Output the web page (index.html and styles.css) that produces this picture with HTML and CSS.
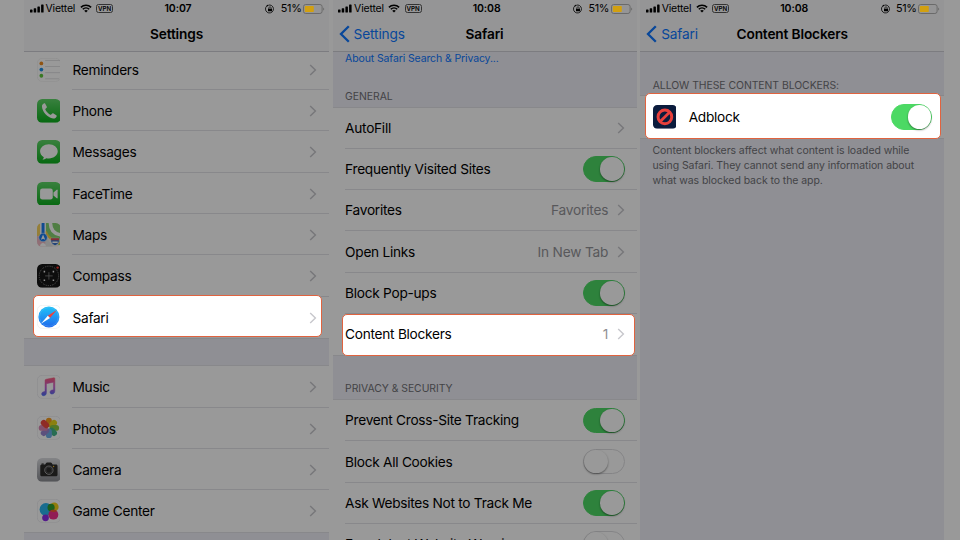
FILE: index.html
```html
<!DOCTYPE html>
<html lang="en">
<head>
    <meta charset="UTF-8">
    <meta name="viewport" content="width=device-width, initial-scale=1.0">
    <title>Content Blockers</title>
    <link rel="stylesheet" href="styles.css">
</head>
<body>
    <!-- shared icons -->
    <svg class="sprite" aria-hidden="true">
        <defs>
            <linearGradient id="green" x1="0" y1="0" x2="0" y2="1">
                <stop offset="0" stop-color="#5fd668"/>
                <stop offset="1" stop-color="#0bae1c"/>
            </linearGradient>
            <linearGradient id="blue" x1="0" y1="0" x2="0" y2="1">
                <stop offset="0" stop-color="#1fc4f8"/>
                <stop offset="1" stop-color="#2068ec"/>
            </linearGradient>
            <linearGradient id="note" x1="0" y1="0" x2="0" y2="1">
                <stop offset="0" stop-color="#fb5c7c"/>
                <stop offset=".5" stop-color="#c95acb"/>
                <stop offset="1" stop-color="#4c6cf5"/>
            </linearGradient>
            <linearGradient id="grey" x1="0" y1="0" x2="0" y2="1">
                <stop offset="0" stop-color="#dbdce0"/>
                <stop offset="1" stop-color="#898b91"/>
            </linearGradient>
            <clipPath id="tile"><rect width="24" height="24" rx="5.2"/></clipPath>
        </defs>
        <symbol id="signal" viewBox="0 0 14 9">
            <rect x="0" y="5.6" width="2.5" height="3" rx=".6"/>
            <rect x="3.7" y="4.2" width="2.5" height="4.4" rx=".6"/>
            <rect x="7.4" y="2.4" width="2.5" height="6.2" rx=".6"/>
            <rect x="11.1" y=".4" width="2.5" height="8.2" rx=".6"/>
        </symbol>
        <symbol id="wifi" viewBox="0 0 12 9">
            <path d="M.9 3.4a7.2 7.2 0 0 1 10.2 0M2.8 5.3a4.6 4.6 0 0 1 6.4 0" fill="none" stroke="#000" stroke-width="1.6"/>
            <path d="M6 8.6 4.2 6.8a2.6 2.6 0 0 1 3.6 0z"/>
        </symbol>
        <symbol id="lock" viewBox="0 0 10 10">
            <path d="M1.9 1.9A4 4 0 1 0 5 1a4 4 0 0 0-1.7.4" fill="none" stroke="#111" stroke-width=".9"/>
            <path d="M3.2.4 3 2.6 1.2 1.8z"/>
            <rect x="3" y="4.7" width="4" height="2.6" rx=".4"/>
            <path d="M3.8 5V4a1.2 1.2 0 0 1 2.4 0v1" fill="none" stroke="#111" stroke-width=".7"/>
        </symbol>
        <symbol id="battery" viewBox="0 0 22 10">
            <rect x=".5" y=".5" width="18.6" height="9" rx="2.2" fill="none" stroke="#6a6a6a"/>
            <rect x="1.8" y="1.9" width="9" height="6.2" rx=".8" fill="#d2a010"/>
            <path d="M20.2 3.4a1.8 1.8 0 0 1 0 3.2z" fill="#6a6a6a"/>
        </symbol>
        <symbol id="chevron" viewBox="0 0 8 12">
            <path d="M1.2 1 6.4 6 1.2 11" fill="none" stroke="currentColor" stroke-width="1.4"/>
        </symbol>
        <symbol id="back" viewBox="0 0 12 18">
            <path d="M9.8 1.2 2 9l7.8 7.8" fill="none" stroke="currentColor" stroke-width="2.3"/>
        </symbol>
        <symbol id="app-reminders" viewBox="0 0 24 24">
            <rect x=".3" y=".3" width="23.4" height="23.4" rx="5" fill="#fff" stroke="#ececec" stroke-width=".7"/>
            <path d="M8.2 2.5h15M8.2 8.6h15.2M8.2 14.8h15.2M8.2 21h14" stroke="#d8d8da" stroke-width=".8"/>
            <circle cx="4.4" cy="5.5" r="1.9" fill="#f08c1e"/>
            <circle cx="4.4" cy="11.7" r="1.9" fill="#1e90e8"/>
            <circle cx="4.4" cy="17.9" r="1.9" fill="#5fc83c"/>
        </symbol>
        <symbol id="app-phone" viewBox="0 0 24 24">
            <rect width="24" height="24" rx="5.2" fill="url(#green)"/>
            <path d="M7.3 4.4c-1.2.5-2.4 1.6-2.3 3.2.3 5.5 5.7 11.3 11.3 12.1 1.7.2 3-.9 3.5-2.1.2-.5.1-.9-.3-1.2l-2.800-1.900c-.5-.3-.9-.3-1.3.1l-1.100 1.100c-.3.3-.6.3-1 .1-1.9-1-3.8-3-4.8-4.900-.2-.4-.2-.7.1-1l1.100-1.100c.4-.4.4-.8.1-1.300L8.300 4.700c-.3-.4-.6-.5-1-.3z" fill="#fff"/>
        </symbol>
        <symbol id="app-messages" viewBox="0 0 24 24">
            <rect width="24" height="24" rx="5.2" fill="url(#green)"/>
            <path d="M12 4.2c-5 0-8.900 3.200-8.900 7.200 0 2.500 1.500 4.700 3.800 6-.1.900-.7 1.700-1.400 2.300 1.500 0 2.900-.6 3.900-1.400.8.200 1.700.3 2.600.3 5 0 8.900-3.200 8.900-7.200S17 4.200 12 4.200z" fill="#fff"/>
        </symbol>
        <symbol id="app-facetime" viewBox="0 0 24 24">
            <rect width="24" height="24" rx="5.2" fill="url(#green)"/>
            <rect x="3.1" y="6.5" width="12.8" height="11.2" rx="2.3" fill="#fff"/>
            <path d="m16.6 10.7 3.300-2.900c.4-.3.900-.1.900.4v7.800c0 .5-.5.700-.9.400l-3.300-2.900z" fill="#fff"/>
        </symbol>
        <symbol id="app-maps" viewBox="0 0 24 24">
            <g clip-path="url(#tile)">
                <rect width="24" height="24" fill="#f3eee4"/>
                <path d="M0 0h3v13H0z" fill="#f8d35c"/>
                <path d="M0 13h9v11H0z" fill="#f0b9c4"/>
                <path d="M9 0h15v24L9 11z" fill="#86d271"/>
                <path d="M13.5-1c0 8 4 12.5 11.5 13" stroke="#fff" stroke-width="3.6" fill="none"/>
                <path d="M8.5 8.5C11 14 17 19 25 21" stroke="#f6ce45" stroke-width="2.2" fill="none"/>
                <path d="M9 12c2 5 4 8 7 12H8z" fill="#e4e4e4"/>
                <path d="M3 24c0-5 6-5 6 0z" fill="#fff"/>
                <path d="M3.5 0h5.2v14H3.5z" fill="#fff"/>
                <path d="M4.6 0h3v14h-3z" fill="#1b7df0"/>
                <circle cx="6.1" cy="14.6" r="4.3" fill="#1b7df0" stroke="#fff" stroke-width=".5"/>
                <path d="m6.1 11.7 2.2 5.100-2.200-1-2.200 1z" fill="#fff"/>
                <path d="M14.2 15.4h8c1.100 3.200-.5 6.200-4 7.500-3.500-1.300-5.100-4.300-4-7.500z" fill="#3973c8" stroke="#fff" stroke-width=".7"/>
                <path d="M14.1 15.3h8.200v2.200h-8.200z" fill="#df4b51"/>
                <path d="M15.5 19.4h5.4" stroke="#fff" stroke-width="1.5"/>
            </g>
        </symbol>
        <symbol id="app-compass" viewBox="0 0 24 24">
            <rect width="24" height="24" rx="5.2" fill="#151515"/>
            <circle cx="12" cy="12" r="9.8" fill="none" stroke="#aaa" stroke-width=".9" stroke-dasharray=".8 1.1"/>
            <path d="M12 8.2v7.6M8.2 12h7.6" stroke="#888" stroke-width=".8"/>
            <path d="M6.7 7.7h1.5M15.8 7.7h1.5M6.7 16.4h1.5M15.8 16.4h1.5" stroke="#eee" stroke-width="1.6"/>
            <circle cx="20.8" cy="3.6" r="1.2" fill="#ff3b30"/>
        </symbol>
        <symbol id="app-safari" viewBox="0 0 24 24">
            <rect x=".3" y=".3" width="23.4" height="23.4" rx="5" fill="#fff" stroke="#ececec" stroke-width=".7"/>
            <circle cx="12" cy="12" r="10.6" fill="url(#blue)"/>
            <circle cx="12" cy="12" r="9.3" fill="none" stroke="#7cc8fb" stroke-width=".7" stroke-dasharray=".5 .7"/>
            <path d="m20 5-6.900 8.100-2.200-2.200z" fill="#f0403b"/>
            <path d="m4 19 6.900-8.100 2.200 2.200z" fill="#fff"/>
        </symbol>
        <symbol id="app-music" viewBox="0 0 24 24">
            <rect x=".3" y=".3" width="23.4" height="23.4" rx="5" fill="#fff" stroke="#e6e6ea" stroke-width=".7"/>
            <path d="M8.100 5.600c0-.8.300-1.100 1-1.300l7.800-1.500c.7-.1 1.100.1 1.100.8v12.500c0 2-1.200 3-2.700 3.100-1.300.1-2.200-.7-2.200-1.800 0-1.200.8-1.900 2.100-2.200 1-.2 1.400-.4 1.400-1.200V7.300L9.500 8.700v9.100c0 2-1.200 3-2.700 3.100-1.200.1-2.100-.7-2.100-1.800 0-1.300.8-1.900 2.100-2.200 1-.2 1.300-.4 1.300-1.200z" fill="url(#note)" stroke="url(#note)" stroke-width=".5"/>
        </symbol>
        <symbol id="app-photos" viewBox="0 0 24 24">
            <rect x=".3" y=".3" width="23.4" height="23.4" rx="5" fill="#fff" stroke="#e6e6ea" stroke-width=".7"/>
            <g class="petals">
                <rect x="9" y="1.7" width="6" height="9.5" rx="3" fill="#f79b1c"/>
                <rect x="9" y="1.7" width="6" height="9.5" rx="3" fill="#e8d51a" transform="rotate(45 12 12)"/>
                <rect x="9" y="1.7" width="6" height="9.5" rx="3" fill="#8cc63f" transform="rotate(90 12 12)"/>
                <rect x="9" y="1.7" width="6" height="9.5" rx="3" fill="#45b58b" transform="rotate(135 12 12)"/>
                <rect x="9" y="1.7" width="6" height="9.5" rx="3" fill="#6eaee8" transform="rotate(180 12 12)"/>
                <rect x="9" y="1.7" width="6" height="9.5" rx="3" fill="#9a86d0" transform="rotate(225 12 12)"/>
                <rect x="9" y="1.7" width="6" height="9.5" rx="3" fill="#d987b4" transform="rotate(270 12 12)"/>
                <rect x="9" y="1.7" width="6" height="9.5" rx="3" fill="#ee4a3f" transform="rotate(315 12 12)"/>
            </g>
        </symbol>
        <symbol id="app-camera" viewBox="0 0 24 24">
            <rect width="24" height="24" rx="5.2" fill="url(#grey)"/>
            <path d="M3.300 8.100c0-1 .6-1.600 1.500-1.600h3.400l1-1.500c.2-.3.500-.5.900-.5h3.800c.4 0 .7.200.9.500l1 1.500h3.400c1 0 1.500.6 1.500 1.600v8.800c0 1-.6 1.500-1.500 1.500H4.800c-.9 0-1.500-.5-1.500-1.500z" fill="#2b2b2b"/>
            <rect x="4.6" y="5.5" width="2.2" height="1.2" fill="#2b2b2b"/>
            <circle cx="12" cy="12.3" r="4.2" fill="#2b2b2b" stroke="#b7b7ba" stroke-width=".8"/>
            <circle cx="12" cy="12.3" r="2.9" fill="none" stroke="#66666a" stroke-width=".5"/>
            <circle cx="16.7" cy="8.6" r=".7" fill="#f5b92c"/>
        </symbol>
        <symbol id="app-gamecenter" viewBox="0 0 24 24">
            <rect x=".3" y=".3" width="23.4" height="23.4" rx="5" fill="#fff" stroke="#e6e6ea" stroke-width=".7"/>
            <circle cx="17.4" cy="8" r="4.4" fill="#f2cf12"/>
            <circle cx="9" cy="10.5" r="6.4" fill="#2ab5ef"/>
            <ellipse cx="14.2" cy="8.6" rx="3.6" ry="3.9" fill="#2f9f2e"/>
            <circle cx="16.5" cy="15.8" r="5" fill="#f2308c"/>
            <path d="M13.2 12.2c2-1.700 5-1.700 7 0-1.800 1.300-5 1.300-7 0z" fill="#f0602c"/>
            <circle cx="8.6" cy="19" r="3.4" fill="#8c2be8"/>
        </symbol>
        <symbol id="app-adblock" viewBox="0 0 24 24">
            <rect width="24" height="24" rx="4.2" fill="#0b1c3d"/>
            <circle cx="12" cy="12" r="6.9" fill="none" stroke="#e8403c" stroke-width="3"/>
            <path d="m7.3 16.7 9.400-9.400" stroke="#e8403c" stroke-width="2.8"/>
        </symbol>
    </svg>

    <main class="screens">
        <!-- Settings -->
        <section class="phone">
            <header class="top-bar">
                <div class="status">
                    <svg class="signal"><use href="#signal"/></svg>
                    <span class="carrier">Viettel</span>
                    <svg class="wifi"><use href="#wifi"/></svg>
                    <span class="vpn">VPN</span>
                    <span class="time">10:07</span>
                    <svg class="lock"><use href="#lock"/></svg>
                    <span class="percent">51%</span>
                    <svg class="battery"><use href="#battery"/></svg>
                </div>
                <nav class="nav">
                    <h1>Settings</h1>
                </nav>
            </header>
            <ul class="list with-icons first-list">
                <li class="row"><svg class="app"><use href="#app-reminders"/></svg><div class="cell"><span>Reminders</span><svg class="chevron"><use href="#chevron"/></svg></div></li>
                <li class="row"><svg class="app"><use href="#app-phone"/></svg><div class="cell"><span>Phone</span><svg class="chevron"><use href="#chevron"/></svg></div></li>
                <li class="row"><svg class="app"><use href="#app-messages"/></svg><div class="cell"><span>Messages</span><svg class="chevron"><use href="#chevron"/></svg></div></li>
                <li class="row"><svg class="app"><use href="#app-facetime"/></svg><div class="cell"><span>FaceTime</span><svg class="chevron"><use href="#chevron"/></svg></div></li>
                <li class="row"><svg class="app"><use href="#app-maps"/></svg><div class="cell"><span>Maps</span><svg class="chevron"><use href="#chevron"/></svg></div></li>
                <li class="row"><svg class="app"><use href="#app-compass"/></svg><div class="cell"><span>Compass</span><svg class="chevron"><use href="#chevron"/></svg></div></li>
                <li class="row highlight hl-safari"><svg class="app"><use href="#app-safari"/></svg><div class="cell"><span>Safari</span><svg class="chevron"><use href="#chevron"/></svg></div></li>
            </ul>
            <ul class="list with-icons second-list">
                <li class="row"><svg class="app"><use href="#app-music"/></svg><div class="cell"><span>Music</span><svg class="chevron"><use href="#chevron"/></svg></div></li>
                <li class="row"><svg class="app"><use href="#app-photos"/></svg><div class="cell"><span>Photos</span><svg class="chevron"><use href="#chevron"/></svg></div></li>
                <li class="row"><svg class="app"><use href="#app-camera"/></svg><div class="cell"><span>Camera</span><svg class="chevron"><use href="#chevron"/></svg></div></li>
                <li class="row"><svg class="app"><use href="#app-gamecenter"/></svg><div class="cell"><span>Game Center</span><svg class="chevron"><use href="#chevron"/></svg></div></li>
            </ul>
        </section>

        <!-- Safari -->
        <section class="phone">
            <header class="top-bar">
                <div class="status">
                    <svg class="signal"><use href="#signal"/></svg>
                    <span class="carrier">Viettel</span>
                    <svg class="wifi"><use href="#wifi"/></svg>
                    <span class="vpn">VPN</span>
                    <span class="time">10:08</span>
                    <svg class="lock"><use href="#lock"/></svg>
                    <span class="percent">51%</span>
                    <svg class="battery"><use href="#battery"/></svg>
                </div>
                <nav class="nav">
                    <a class="back" href="#"><svg><use href="#back"/></svg>Settings</a>
                    <h1>Safari</h1>
                </nav>
            </header>
            <div class="group-head general">
                <a class="about" href="#">About Safari Search &amp; Privacy...</a>
                <h2>GENERAL</h2>
            </div>
            <ul class="list">
                <li class="row"><div class="cell"><span>AutoFill</span><svg class="chevron"><use href="#chevron"/></svg></div></li>
                <li class="row"><div class="cell"><span>Frequently Visited Sites</span><i class="toggle on"></i></div></li>
                <li class="row"><div class="cell"><span>Favorites</span><span class="value">Favorites</span><svg class="chevron"><use href="#chevron"/></svg></div></li>
                <li class="row"><div class="cell"><span>Open Links</span><span class="value">In New Tab</span><svg class="chevron"><use href="#chevron"/></svg></div></li>
                <li class="row"><div class="cell"><span>Block Pop-ups</span><i class="toggle on"></i></div></li>
                <li class="row highlight hl-blockers"><div class="cell"><span>Content Blockers</span><span class="value">1</span><svg class="chevron"><use href="#chevron"/></svg></div></li>
            </ul>
            <div class="group-head privacy">
                <h2>PRIVACY &amp; SECURITY</h2>
            </div>
            <ul class="list">
                <li class="row"><div class="cell"><span>Prevent Cross-Site Tracking</span><i class="toggle on"></i></div></li>
                <li class="row"><div class="cell"><span>Block All Cookies</span><i class="toggle"></i></div></li>
                <li class="row"><div class="cell"><span>Ask Websites Not to Track Me</span><i class="toggle on"></i></div></li>
                <li class="row"><div class="cell"><span>Fraudulent Website Warning</span><i class="toggle"></i></div></li>
            </ul>
        </section>

        <!-- Content Blockers -->
        <section class="phone">
            <header class="top-bar">
                <div class="status">
                    <svg class="signal"><use href="#signal"/></svg>
                    <span class="carrier">Viettel</span>
                    <svg class="wifi"><use href="#wifi"/></svg>
                    <span class="vpn">VPN</span>
                    <span class="time">10:08</span>
                    <svg class="lock"><use href="#lock"/></svg>
                    <span class="percent">51%</span>
                    <svg class="battery"><use href="#battery"/></svg>
                </div>
                <nav class="nav">
                    <a class="back" href="#"><svg><use href="#back"/></svg>Safari</a>
                    <h1>Content Blockers</h1>
                </nav>
            </header>
            <div class="group-head allow">
                <h2>ALLOW THESE CONTENT BLOCKERS:</h2>
            </div>
            <ul class="list with-icons">
                <li class="row highlight hl-adblock"><svg class="app"><use href="#app-adblock"/></svg><div class="cell"><span>Adblock</span><i class="toggle on"></i></div></li>
            </ul>
            <p class="footnote">Content blockers affect what content is loaded while<br>using Safari. They cannot send any information about<br>what was blocked back to the app.</p>
        </section>
    </main>
</body>
</html>
```
FILE: styles.css
```css
* {
    margin: 0;
    padding: 0;
    box-sizing: border-box;
}

:root {
    --row: #999999;
    --group: #8f8f94;
    --bar: #959596;
    --line: #88888b;
    --edge: #7c7c80;
    --link: #08479a;
    --accent: #e0633f;
    --row-height: 41.3px;
}

body {
    width: 960px;
    height: 540px;
    overflow: hidden;
    background: var(--row);
    font-family: Inter, "Liberation Sans", sans-serif;
    font-size: 13.7px;
    color: #000;
}

.sprite {
    position: absolute;
    width: 0;
    height: 0;
}

.screens {
    display: grid;
    grid-template-columns: 305px 304px 304px;
    column-gap: 3.6px;
    height: 540px;
    padding-left: 24px;
}

.phone {
    height: 540px;
    overflow: hidden;
    background: var(--group);
}

/* Status and navigation bars */
.top-bar {
    height: 52px;
    background: var(--bar);
    border-bottom: 1px solid var(--edge);
}

.status {
    display: flex;
    align-items: center;
    height: 17px;
    padding: 0 4px 0 5.5px;
    font-size: 10.5px;
}

.signal {
    width: 14px;
    height: 9px;
}

.carrier {
    width: 30px;
    margin-left: 2px;
    letter-spacing: -.2px;
    white-space: nowrap;
}

.wifi {
    width: 12px;
    height: 9px;
    margin-left: 4px;
}

.vpn {
    width: 17px;
    height: 9px;
    margin-left: 4.5px;
    border: 1px solid #333;
    border-radius: 2.5px;
    font-size: 6.2px;
    font-weight: 600;
    line-height: 7.5px;
    text-align: center;
}

.time {
    width: 30px;
    margin: 0 auto 0 50px;
    font-weight: 600;
    letter-spacing: -.1px;
    text-align: center;
}

.lock {
    width: 10px;
    height: 10px;
    margin-right: 5.5px;
}

.percent {
    margin-right: 1.5px;
    font-size: 10.8px;
    letter-spacing: -.3px;
}

.battery {
    width: 22px;
    height: 10px;
}

.nav {
    position: relative;
    display: flex;
    align-items: center;
    justify-content: center;
    height: 34px;
}

.nav h1 {
    font-size: 13.7px;
    font-weight: 600;
    letter-spacing: -.15px;
}

.back {
    position: absolute;
    left: 6px;
    display: flex;
    align-items: center;
    gap: 3px;
    color: var(--link);
    letter-spacing: -.15px;
    text-decoration: none;
}

.back svg {
    width: 12px;
    height: 18px;
}

/* Lists */
.list {
    list-style: none;
    background: var(--row);
    box-shadow: 0 -1px 0 var(--line), 0 1px 0 var(--line);
}

.first-list {
    box-shadow: 0 1px 0 var(--line);
}

.first-list .row:first-child {
    height: 38.2px;
}

.first-list .row:first-child .app,
.first-list .row:first-child span,
.first-list .row:first-child .chevron {
    margin-top: -2px;
}

.second-list {
    margin-top: 28.4px;
}

.row {
    position: relative;
    display: flex;
    align-items: center;
    height: var(--row-height);
    padding-left: 12.5px;
}

.cell {
    position: relative;
    display: flex;
    flex: 1;
    align-items: center;
    height: 100%;
    padding-right: 12px;
    border-bottom: 1px solid var(--line);
    letter-spacing: -.28px;
}

.with-icons .cell {
    padding-top: 1.4px;
}

.row:last-child .cell {
    border-bottom-color: transparent;
}

.app {
    position: relative;
    width: 23.8px;
    height: 23.8px;
    margin: 0 12.2px 0 0;
    filter: brightness(.6);
}

.chevron {
    width: 8px;
    height: 12px;
    margin-left: auto;
    color: #77777a;
}

.value {
    margin-left: auto;
    color: #58585b;
    letter-spacing: -.2px;
}

.value + .chevron {
    margin-left: 8.4px;
}

.toggle {
    width: 41.5px;
    height: 25.5px;
    margin-left: auto;
    border: 1px solid #dcdcdf;
    border-radius: 13px;
    filter: brightness(.6);
}

.toggle::before {
    content: "";
    display: block;
    width: 23.5px;
    height: 23.5px;
    border-radius: 50%;
    background: #fff;
    box-shadow: 0 1px 2px rgba(0, 0, 0, .45);
}

.toggle.on {
    background: #4cd964;
    border-color: #4cd964;
}

.toggle.on::before {
    margin-left: auto;
}

/* Spotlighted rows */
.highlight {
    z-index: 1;
}

.highlight::before {
    content: "";
    position: absolute;
    background: #fff;
    border: 1.5px solid var(--accent);
    border-radius: 5px;
}

.highlight .app,
.highlight .toggle {
    filter: none;
}

.highlight .chevron {
    color: #c7c7cc;
}

.highlight .value {
    color: #8e8e93;
}

.hl-safari::before {
    inset: -2px 7px 1px 9px;
}

.hl-blockers::before {
    inset: 0 2px -1px 9.5px;
}

.hl-adblock::before {
    inset: -3px 3px -1px 5px;
}

/* Group headers and notes */
.group-head {
    display: flex;
    flex-direction: column;
    justify-content: flex-end;
    padding: 0 12.5px 5px;
}

.group-head h2 {
    font-size: 10.4px;
    font-weight: 400;
    letter-spacing: -.04px;
    color: #434346;
}

.general {
    height: 55.5px;
}

.about {
    margin-bottom: auto;
    font-size: 10.5px;
    letter-spacing: -.12px;
    color: var(--link);
    text-decoration: none;
}

.privacy {
    height: 44.9px;
}

.allow {
    height: 44.3px;
    padding-bottom: 4px;
}

.footnote {
    padding: 6.8px 12.3px;
    font-size: 10.5px;
    line-height: 14.8px;
    letter-spacing: -.07px;
    color: #434346;
    white-space: nowrap;
}
```
